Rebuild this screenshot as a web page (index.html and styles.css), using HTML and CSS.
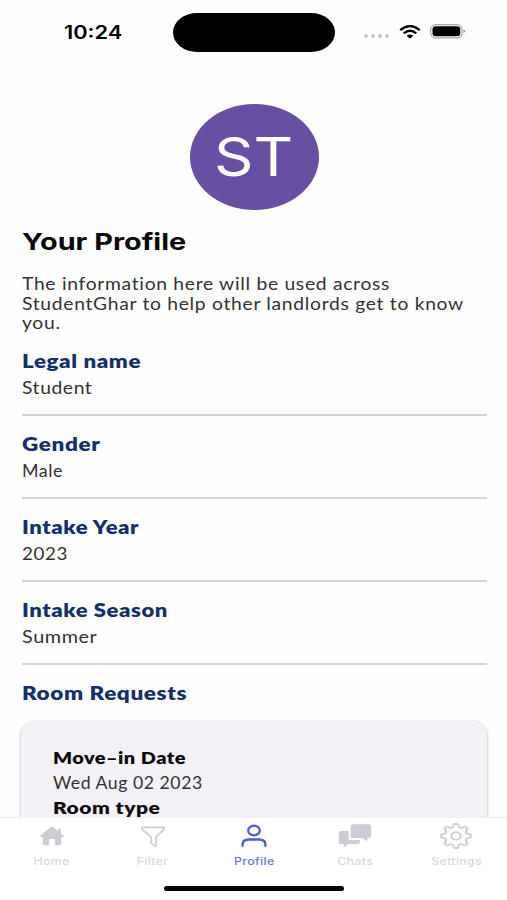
FILE: index.html
```html
<!DOCTYPE html>
<html lang="en">
<head>
<meta charset="utf-8">
<title>Your Profile</title>
<link rel="stylesheet" href="styles.css">
</head>
<body>
<div class="screen">
  <header class="status">
    <div class="time"><span class="wide">10:24</span></div>
    <div class="island"></div>
    <div class="signals">
      <svg class="dots" width="26" height="4" viewBox="0 0 26 4"><g fill="#c6c6c6"><circle cx="2" cy="2" r="2"/><circle cx="9" cy="2" r="2"/><circle cx="16" cy="2" r="2"/><circle cx="23" cy="2" r="2"/></g></svg>
      <svg class="wifi" width="22" height="14" viewBox="0 0 22 14"><g fill="none" stroke="#000" stroke-width="2.4"><path d="M1.2 5.1Q11-3 20.8 5.1"/><path d="M4.8 8.4Q11 3.3 17.2 8.4"/></g><path d="M7.6 10.7Q11 8.2 14.4 10.7L11.8 13.1Q11 13.8 10.2 13.1Z"/></svg>
      <svg class="battery" width="36" height="15" viewBox="0 0 36 15"><rect x=".7" y=".7" width="31.4" height="13.2" rx="4.8" fill="none" stroke="#aaa" stroke-width="1.2"/><rect x="2.5" y="2.3" width="27.8" height="10" rx="3.3"/><path d="M33.5 5.3Q36.8 7.3 33.5 9.3Z" fill="#999"/></svg>
    </div>
  </header>
  <main class="content">
    <div class="avatar"><span class="wide">ST</span></div>
    <h1><span class="wide">Your Profile</span></h1>
    <p class="intro"><span class="wide">The information here will be used across<br>StudentGhar to help other landlords get to know<br>you.</span></p>
    <section class="field name"><h2><span class="wide">Legal name</span></h2><p><span class="wide">Student</span></p></section>
    <section class="field gender"><h2><span class="wide">Gender</span></h2><p><span class="wide">Male</span></p></section>
    <section class="field year"><h2><span class="wide">Intake Year</span></h2><p><span class="wide">2023</span></p></section>
    <section class="field season"><h2><span class="wide">Intake Season</span></h2><p><span class="wide">Summer</span></p></section>
    <h2 class="requests"><span class="wide">Room Requests</span></h2>
    <article class="card">
      <h3 class="move-in"><span class="wide">Move–in Date</span></h3>
      <p><span class="wide">Wed Aug 02 2023</span></p>
      <h3><span class="wide">Room type</span></h3>
    </article>
  </main>
  <nav class="tabs">
    <div class="tab">
      <svg width="26" height="26" viewBox="0 0 26 26"><path fill="#cccdd5" d="M13 3.6Q12.4 3.6 11.8 4.1L.9 12.9Q.5 13.9 1.5 13.9H3.8V20.3Q3.8 22.2 6 22.2H10V17Q10 16 11 16H15Q16 16 16 17V22.2H20Q22.2 22.2 22.2 20.3V13.9H24.5Q25.5 13.9 25.1 12.9L21.8 10.2V5.6H19V7.9L14.2 4.1Q13.6 3.6 13 3.6Z"/></svg>
      <span class="tab-label"><span class="wide">Home</span></span>
    </div>
    <div class="tab">
      <svg width="26" height="26" viewBox="0 0 26 26"><path fill="none" stroke="#cccdd5" stroke-width="1.7" stroke-linejoin="round" d="M2.1 4.3H23.9Q24.6 4.7 23.9 6.3L16 14.2V23.4L11.2 20.4V14.2L2.1 6.3Q1.4 4.7 2.1 4.3Z"/></svg>
      <span class="tab-label"><span class="wide">Filter</span></span>
    </div>
    <div class="tab active">
      <svg width="26" height="26" viewBox="0 0 26 26"><g fill="none" stroke="#4f5bd5" stroke-width="2.3" stroke-linecap="round"><ellipse cx="13" cy="7.5" rx="5.8" ry="4.9"/><path d="M1.6 23V21.5Q1.6 16.5 8 16.5H18Q24.4 16.5 24.4 21.5V23"/></g></svg>
      <span class="tab-label"><span class="wide">Profile</span></span>
    </div>
    <div class="tab">
      <svg width="34" height="26" viewBox="0 0 34 26"><g fill="#cccdd5"><path d="M15.2 1.2H30.5Q33.2 1.2 33.2 3.7V12.5Q33.2 15 30.5 15H29.5V18.3L24 15H12.7V3.7Q12.7 1.2 15.2 1.2Z"/><path d="M3.3 8H10.7V17H22V18.5Q22 21 19.3 21H10.2L5.8 24.8V21H3.3Q.8 21 .8 18.5V10.5Q.8 8 3.3 8Z"/></g></svg>
      <span class="tab-label"><span class="wide">Chats</span></span>
    </div>
    <div class="tab">
      <svg width="32" height="26" viewBox="0 0 32 26">
        <defs><path id="tooth" d="M-1.5-11.6Q0-12.4 1.5-11.6C2.2-7.6 3.82-6.92 7.14-9.26"/></defs>
        <g transform="translate(16 13) scale(1.24 1.02)" fill="none" stroke="#cccdd5" stroke-width="1.6" stroke-linecap="round">
          <use href="#tooth"/><use href="#tooth" transform="rotate(45)"/><use href="#tooth" transform="rotate(90)"/><use href="#tooth" transform="rotate(135)"/>
          <use href="#tooth" transform="rotate(180)"/><use href="#tooth" transform="rotate(225)"/><use href="#tooth" transform="rotate(270)"/><use href="#tooth" transform="rotate(315)"/>
          <circle r="3.7"/>
        </g>
      </svg>
      <span class="tab-label"><span class="wide">Settings</span></span>
    </div>
    <div class="home-bar"></div>
  </nav>
</div>
</body>
</html>
```
FILE: styles.css
```css
* { box-sizing: border-box; }
body { margin: 0; background: #fff; font-family: Lato, "Liberation Sans", sans-serif; }
h1, h2, h3, p { margin: 0; }
.screen { display: flex; flex-direction: column; width: 507px; height: 900px; overflow: hidden; background: #fefefe; }
.wide { display: inline-block; white-space: nowrap; transform: scaleX(1.2); transform-origin: 0 50%; }

.status { display: grid; grid-template-columns: 173px 162px 172px; height: 64px; padding-top: 13px; flex: none; }
.time { padding-left: 64px; font: 600 18px/39px Inter, sans-serif; }
.time .wide { transform: scaleX(1.21); }
.island { height: 39px; border-radius: 24px / 19.5px; background: #000; }
.signals { display: flex; align-items: flex-start; padding-left: 29px; }
.dots { margin-top: 21px; }
.wifi { margin: 12px 0 0 9px; }
.battery { margin: 11px 0 0 9px; }

.content { flex: 1; min-height: 0; overflow: hidden; padding: 40px 20px 0 22px; }
.avatar { width: 129px; height: 106px; margin-left: 168px; border-radius: 50%; background: #674fa3; color: #fff; font: 400 53px/107px Inter, sans-serif; padding-left: 24px; }
.avatar .wide { transform: scaleX(1.16); }
h1 { margin-top: 15px; font: 700 23.5px/33px Inter, sans-serif; color: #0a0a0a; }
h1 .wide { transform: scaleX(1.228); }
.intro { margin-top: 17px; height: 59px; font-size: 16.5px; line-height: 19.5px; letter-spacing: .6px; color: #333; }
.intro .wide { transform: scaleX(1.168); }
h2 { font-size: 19px; font-weight: 800; line-height: 27px; letter-spacing: .5px; color: #14306a; }
h2 .wide { transform: scaleX(1.185); }
.field { height: 83px; width: 465px; padding-top: 14px; border-bottom: 2px solid #d3d3d3; }
.name { height: 82px; padding-top: 13px; }
.field p, .card p { font-size: 16.5px; line-height: 29px; letter-spacing: .5px; color: #333; }
.name p .wide { transform: scaleX(1.17); }
.gender p .wide { transform: scaleX(1.08); }
.year p .wide { transform: scaleX(1.14); }
.name h2 .wide { transform: scaleX(1.175); }
.year h2 .wide, .season h2 .wide { transform: scaleX(1.16); }
.requests { margin-top: 14px; }
.card { width: 466px; height: 220px; margin: 15px 0 0 -1px; padding: 25px 32px; border-radius: 16px 16px 0 0 / 14px 14px 0 0; background: #f4f2f7; box-shadow: 0 1px 3px rgba(0,0,0,.35); }
h3 { font-size: 17.5px; font-weight: 800; line-height: 24px; letter-spacing: .4px; color: #0a0a0a; }
.move-in .wide { transform: scaleX(1.14); }
.card p { line-height: 26px; }
.card p .wide { transform: scaleX(1.07); }
.card p + h3 { line-height: 23px; }

.tabs { display: grid; grid-template-columns: repeat(5, 101.2px); grid-template-rows: 53px 1fr; flex: none; height: 83px; padding-left: 1px; border-top: 1px solid #eee; background: #fff; }
.tab { display: flex; flex-direction: column; align-items: center; padding-top: 5px; color: #d6d7dc; }
.tab svg { flex: none; }
.tab-label { font: 500 10.5px/26px Inter, sans-serif; letter-spacing: .3px; }
.tab-label .wide { transform-origin: 50% 50%; transform: scaleX(1.17); }
.active { color: #6a74e0; }
.home-bar { grid-column: 1 / -1; justify-self: center; width: 180px; height: 5px; margin-top: 15px; border-radius: 3px; background: #000; }
```
